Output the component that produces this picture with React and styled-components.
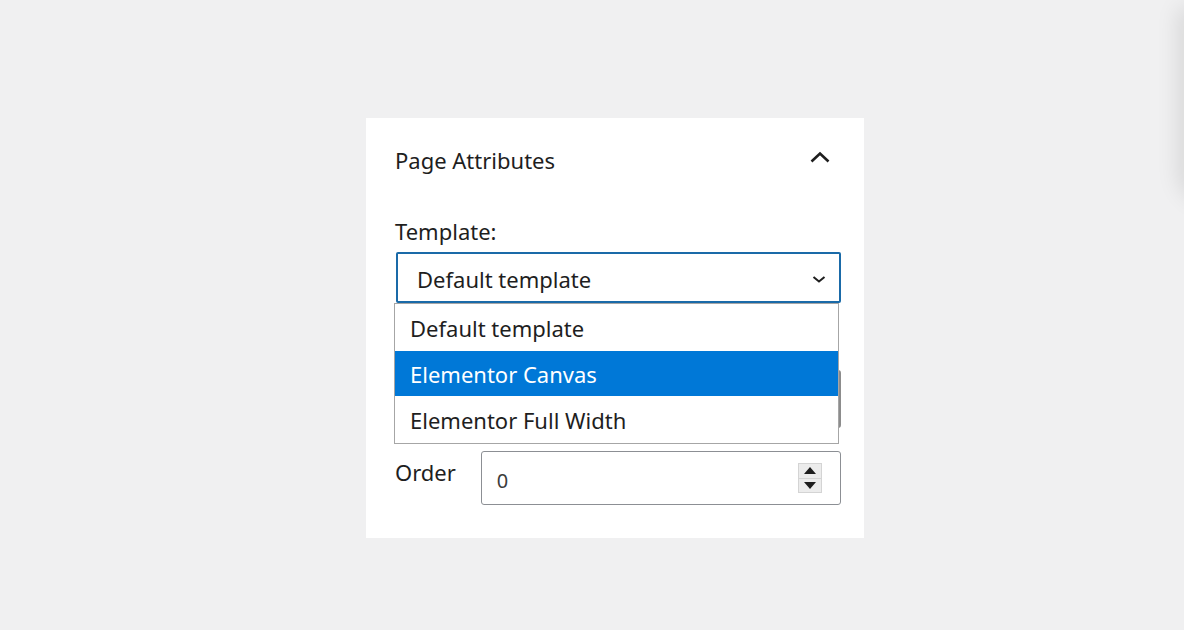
import React from "react";
import styled, { createGlobalStyle } from "styled-components";

const GlobalStyle = createGlobalStyle`
  html, body {
    margin: 0;
    padding: 0;
    background: #f0f0f1;
    font-family: "Noto Sans", "Open Sans", sans-serif;
    color: #1e1e1e;
  }
`;

const options = ["Default template", "Elementor Canvas", "Elementor Full Width"];

const App = () => {
  return (
    <StPage>
      <GlobalStyle />
      <StPanel>
        <StHeader>
          <StTitle>Page Attributes</StTitle>
          <svg width="24" height="24" viewBox="0 0 24 24">
            <path
              d="M3.5 15.5 L12 7.5 L20.5 15.5"
              fill="none"
              stroke="#1e1e1e"
              strokeWidth="2.6"
            />
          </svg>
        </StHeader>
        <StLabel>Template:</StLabel>
        <StSelectWrap>
          <StSelect>
            <span>Default template</span>
            <svg width="16" height="16" viewBox="0 0 16 16">
              <path
                d="M2.5 6 L8 10.5 L13.5 6"
                fill="none"
                stroke="#1e1e1e"
                strokeWidth="2"
              />
            </svg>
          </StSelect>
          <StDropdown>
            {options.map((o, i) => (
              <StOption key={o} $active={i === 1}>
                {o}
              </StOption>
            ))}
          </StDropdown>
        </StSelectWrap>
        <StHidden>
          <StHiddenBox />
        </StHidden>
        <StOrderRow>
          <StOrderLabel>Order</StOrderLabel>
          <StNumber>
            <span>0</span>
            <StSpinner>
              <StArrow $up />
              <StArrow />
            </StSpinner>
          </StNumber>
        </StOrderRow>
      </StPanel>
      <StShadow />
    </StPage>
  );
};

export default App;

const StPage = styled.div`
  width: 1184px;
  height: 630px;
  overflow: hidden;
  display: flex;
  align-items: flex-start;
  padding: 118px 0 0 366px;
  box-sizing: border-box;
`;

const StShadow = styled.div`
  margin-left: auto;
  margin-right: -30px;
  margin-top: -118px;
  width: 30px;
  height: 195px;
  border-radius: 0 0 0 30px;
  background: #f0f0f1;
  box-shadow: -6px 8px 22px rgba(0, 0, 0, 0.1);
`;

const StPanel = styled.div`
  width: 498px;
  height: 420px;
  background: #fff;
  padding: 0 23px 0 29px;
  box-sizing: border-box;
  display: flex;
  flex-direction: column;
`;

const StHeader = styled.div`
  height: 84px;
  display: flex;
  align-items: center;
  justify-content: space-between;
  padding-bottom: 1px;
  svg {
    margin-right: 9px;
    margin-top: -5px;
  }
`;

const StTitle = styled.div`
  font-size: 22px;
`;

const StLabel = styled.div`
  font-size: 22px;
  line-height: 28px;
  margin-top: 14px;
  margin-bottom: 7px;
`;

const StSelectWrap = styled.div`
  position: relative;
  z-index: 2;
`;

const StSelect = styled.div`
  margin-left: 1px;
  height: 51px;
  border: 2px solid #1a6aa8;
  border-radius: 2px;
  box-sizing: border-box;
  display: flex;
  align-items: center;
  justify-content: space-between;
  padding: 3px 12px 0 19px;
  font-size: 22px;
  width: 445px;
`;

const StDropdown = styled.div`
  position: absolute;
  top: 51px;
  left: -1px;
  width: 445px;
  box-sizing: border-box;
  border: 1px solid #a6a6a6;
  background: #fff;
`;

const StOption = styled.div`
  height: ${p => (p.$active ? "45px" : "47px")};
  display: flex;
  align-items: center;
  padding-left: 15px;
  font-size: 22px;
  background: ${p => (p.$active ? "#0078d7" : "#fff")};
  color: ${p => (p.$active ? "#fff" : "#1e1e1e")};
`;

const StHidden = styled.div`
  height: 148px;
  display: flex;
  flex-direction: column;
  justify-content: flex-end;
  padding-bottom: 23px;
  box-sizing: border-box;
`;

const StHiddenBox = styled.div`
  height: 58px;
  width: 445px;
  margin-left: 1px;
  border: 2px solid #8c8c8c;
  border-radius: 3px;
  box-sizing: border-box;
`;

const StOrderRow = styled.div`
  display: flex;
  align-items: flex-start;
  gap: 25px;
`;

const StOrderLabel = styled.div`
  font-size: 22px;
  padding-top: 6px;
`;

const StNumber = styled.div`
  flex: 1;
  height: 54px;
  border: 1px solid #8c8f94;
  border-radius: 3px;
  box-sizing: border-box;
  display: flex;
  align-items: center;
  justify-content: space-between;
  padding: 4px 18px 0 15px;
  font-size: 20px;
  color: #3c3c3c;
`;

const StSpinner = styled.div`
  width: 24px;
  height: 30px;
  margin-top: -4px;
  display: flex;
  flex-direction: column;
  background: #ececec;
  border: 1px solid #d4d4d4;
  box-sizing: border-box;
`;

const StArrow = styled.div`
  flex: 1;
  display: flex;
  align-items: center;
  justify-content: center;
  border-bottom: ${p => (p.$up ? "1px solid #d4d4d4" : "none")};
  &::after {
    content: "";
    border-left: 6px solid transparent;
    border-right: 6px solid transparent;
    ${p =>
      p.$up
        ? "border-bottom: 7px solid #1e1e1e;"
        : "border-top: 7px solid #1e1e1e;"}
  }
`;
